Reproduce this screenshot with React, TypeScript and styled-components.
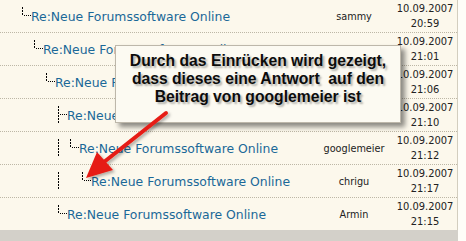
import React from "react";
import styled, { createGlobalStyle } from "styled-components";

const Global = createGlobalStyle`
  html, body { margin: 0; padding: 0; background: #fefdf8; overflow: hidden; }
  #root { width: 466px; height: 241px; }
`;

const Page = styled.div`
  position: relative;
  width: 466px;
  height: 241px;
  overflow: hidden;
`;

const Table = styled.div`
  width: 457px;
  background: #fcf8ec;
  border-right: 1px solid #d3cebf;
`;

const Row = styled.div`
  display: grid;
  grid-template-columns: 1fr 78px 64px;
  height: 32px;
  border-bottom: 1px dotted #bdb7a6;
  &:last-child { border-bottom: none; }
`;

const TitleCell = styled.div`
  display: flex;
  align-items: center;
  padding-left: 22px;
  overflow: hidden;
  white-space: nowrap;
`;

const TitleLink = styled.a`
  font-family: "DejaVu Sans", Verdana, sans-serif;
  font-size: 12.4px;
  color: #1a6898;
  text-decoration: none;
`;

const UserCell = styled.div`
  display: flex;
  align-items: center;
  justify-content: center;
  font-family: "DejaVu Sans Condensed", "DejaVu Sans", sans-serif;
  font-size: 10.8px;
  color: #222;
`;

const DateCell = styled.div`
  display: flex;
  flex-direction: column;
  align-items: center;
  justify-content: center;
  font-family: "DejaVu Sans Condensed", "DejaVu Sans", sans-serif;
  font-size: 11px;
  line-height: 15px;
  color: #222;
`;

const BottomBar = styled.div`
  width: 458px;
  height: 11px;
  background: #d3d0c9;
`;

const Callout = styled.div`
  position: absolute;
  left: 115px;
  top: 45px;
  width: 286px;
  height: 78px;
  box-sizing: border-box;
  padding-top: 5.5px;
  background: #fcfaf2;
  border: 1px solid #bdb7aa;
  box-shadow: 4px 4px 5px rgba(0, 0, 0, 0.45);
  font-family: "Liberation Sans", Arial, sans-serif;
  font-weight: bold;
  font-size: 15.7px;
  line-height: 18px;
  color: #0c0c0c;
  text-align: center;
  text-shadow: 2px 2px 2px rgba(0, 0, 0, 0.3);
`;

const ArrowSvg = styled.svg`
  position: absolute;
  left: 0;
  top: 0;
  pointer-events: none;
`;

const Glyph = styled.svg`
  flex: none;
  display: block;
`;

type Kind = "end" | "tee" | "pipe" | "blank";

function Tree({ kind }: { kind: Kind }) {
  const w = kind === "end" || kind === "tee" ? 9 : 12;
  const dots: Array<[number, number, number]> = [];
  if (kind !== "blank") {
    const yEnd = kind === "end" ? 7 : 17;
    for (let y = 0; y <= yEnd; y += 3) dots.push([0, y, 2]);
  }
  if (kind === "end" || kind === "tee") {
    for (let x = 2; x <= 8; x += 2) dots.push([x, 8, 1]);
  }
  return (
    <Glyph width={w} height={18} viewBox={`0 0 ${w} 18`} shapeRendering="crispEdges">
      {dots.map(([x, y, h], i) => (
        <rect key={i} x={x} y={y} width={1} height={h} fill="#000" />
      ))}
    </Glyph>
  );
}

type Post = { guides: Kind[]; elbow: Kind; user: string; date: string; time: string };

const posts: Post[] = [
  { guides: [], elbow: "end", user: "sammy", date: "10.09.2007", time: "20:59" },
  { guides: ["blank"], elbow: "end", user: "", date: "10.09.2007", time: "21:01" },
  { guides: ["blank", "blank"], elbow: "end", user: "", date: "10.09.2007", time: "21:06" },
  { guides: ["blank", "blank", "blank"], elbow: "tee", user: "", date: "10.09.2007", time: "21:10" },
  { guides: ["blank", "blank", "blank", "pipe"], elbow: "end", user: "googlemeier", date: "10.09.2007", time: "21:12" },
  { guides: ["blank", "blank", "blank", "pipe", "blank"], elbow: "end", user: "chrigu", date: "10.09.2007", time: "21:17" },
  { guides: ["blank", "blank", "blank"], elbow: "end", user: "Armin", date: "10.09.2007", time: "21:15" },
];

export default function App() {
  return (
    <Page>
      <Global />
      <Table>
        {posts.map((p, i) => (
          <Row key={i}>
            <TitleCell>
              {p.guides.map((g, j) => (
                <Tree key={j} kind={g} />
              ))}
              <Tree kind={p.elbow} />
              <TitleLink href="#">Re:Neue Forumssoftware Online</TitleLink>
            </TitleCell>
            <UserCell>{p.user}</UserCell>
            <DateCell>
              <span>{p.date}</span>
              <span>{p.time}</span>
            </DateCell>
          </Row>
        ))}
      </Table>
      <BottomBar />
      <Callout>
        Durch das Einrücken wird gezeigt,
        <br />
        dass dieses eine Antwort{"\u00a0"} auf den
        <br />
        Beitrag von googlemeier ist
      </Callout>
      <ArrowSvg width={466} height={241} viewBox="0 0 466 241">
        <defs>
          <filter id="sh" x="-20%" y="-20%" width="140%" height="140%">
            <feDropShadow dx="2" dy="2" stdDeviation="1.5" floodColor="#000" floodOpacity="0.3" />
          </filter>
        </defs>
        <g filter="url(#sh)">
          <line x1={166} y1={113} x2={104} y2={162} stroke="#e61e14" strokeWidth={4} strokeLinecap="round" />
          <polygon points="86,178 97,152 113,170" fill="#e61e14" />
        </g>
      </ArrowSvg>
    </Page>
  );
}
